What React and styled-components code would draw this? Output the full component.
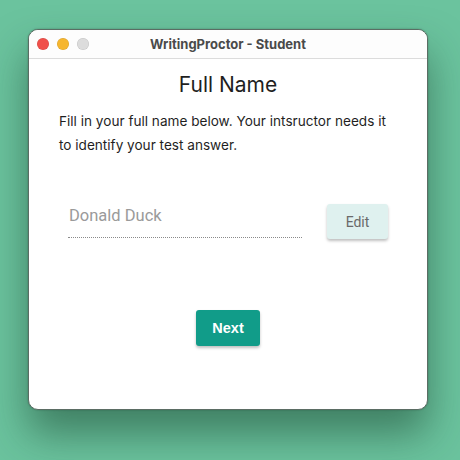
import styled, { createGlobalStyle } from "styled-components";

const GlobalStyle = createGlobalStyle`
  html, body {
    margin: 0;
    padding: 0;
    background: #6bc39e;
  }
  body {
    width: 460px;
    height: 460px;
    overflow: hidden;
  }
`;

const Desktop = styled.div`
  width: 460px;
  height: 460px;
  padding: 29px 0 0 28px;
  box-sizing: border-box;
`;

const Window = styled.div`
  width: 400px;
  height: 381px;
  background: #fff;
  border-radius: 10px;
  border: 0.5px solid #5b6d64;
  box-sizing: border-box;
  box-shadow: 0 24px 40px rgba(20, 60, 40, 0.5), 0 0 2px rgba(0, 0, 0, 0.3);
  overflow: hidden;
  display: flex;
  flex-direction: column;
`;

const TitleBar = styled.div`
  height: 28px;
  display: flex;
  align-items: center;
  border-bottom: 1px solid #dcdcdc;
  background: #fdfdfd;
`;

const Lights = styled.div`
  display: flex;
  gap: 8px;
  padding-left: 8px;
`;

const Light = styled.span`
  width: 12px;
  height: 12px;
  border-radius: 50%;
  background: ${(p) => p.$color};
  box-shadow: inset 0 0 0 0.5px rgba(0, 0, 0, 0.12);
`;

const Title = styled.div`
  flex: 1;
  text-align: center;
  margin-right: 60px;
  font-family: Inter, "Liberation Sans", sans-serif;
  font-weight: 700;
  font-size: 13px;
  color: #4a4a4a;
`;

const Content = styled.div`
  padding: 0 30px;
  display: flex;
  flex-direction: column;
  font-family: Inter, "Liberation Sans", sans-serif;
`;

const Heading = styled.h1`
  margin: 12px 0 0;
  text-align: center;
  font-weight: 400;
  font-size: 21px;
  line-height: 28px;
  color: #1f1f1f;
`;

const Text = styled.p`
  margin: 10px 0 0;
  font-size: 13.6px;
  line-height: 24px;
  color: #1f1f1f;
`;

const Row = styled.div`
  margin-top: 41px;
  padding-left: 9px;
  display: flex;
  align-items: flex-end;
  gap: 25px;
`;

const NameInput = styled.input`
  width: 234px;
  height: 40px;
  padding: 0 0 4px 1px;
  box-sizing: border-box;
  border: none;
  border-bottom: 1px dotted #8a8a8a;
  outline: none;
  background: transparent;
  font-family: Roboto, "Liberation Sans", sans-serif;
  font-size: 16.5px;
  color: #9a9a9a;

  &::placeholder {
    color: #9a9a9a;
  }
`;

const EditButton = styled.button`
  width: 61px;
  height: 35px;
  margin-bottom: -1px;
  border: none;
  border-radius: 3px;
  background: #dff1ef;
  color: #6a6a6a;
  font-family: Roboto, "Liberation Sans", sans-serif;
  font-size: 14px;
  box-shadow: 0 2px 3px rgba(0, 0, 0, 0.25);
`;

const Footer = styled.div`
  margin-top: 72px;
  display: flex;
  justify-content: center;
`;

const NextButton = styled.button`
  width: 64px;
  height: 36px;
  border: none;
  border-radius: 3px;
  background: #119c89;
  color: #fff;
  font-family: "Liberation Sans", Arial, sans-serif;
  font-weight: 700;
  font-size: 14.5px;
  box-shadow: 0 2px 3px rgba(0, 0, 0, 0.25);
`;

export default function App() {
  return (
    <Desktop>
      <GlobalStyle />
      <Window>
        <TitleBar>
          <Lights>
            <Light $color="#f0504a" />
            <Light $color="#f6b62f" />
            <Light $color="#dcdcdc" />
          </Lights>
          <Title>WritingProctor - Student</Title>
        </TitleBar>
        <Content>
          <Heading>Full Name</Heading>
          <Text>
            Fill in your full name below. Your intsructor needs it to identify
            your test answer.
          </Text>
          <Row>
            <NameInput placeholder="Donald Duck" />
            <EditButton>Edit</EditButton>
          </Row>
          <Footer>
            <NextButton>Next</NextButton>
          </Footer>
        </Content>
      </Window>
    </Desktop>
  );
}
